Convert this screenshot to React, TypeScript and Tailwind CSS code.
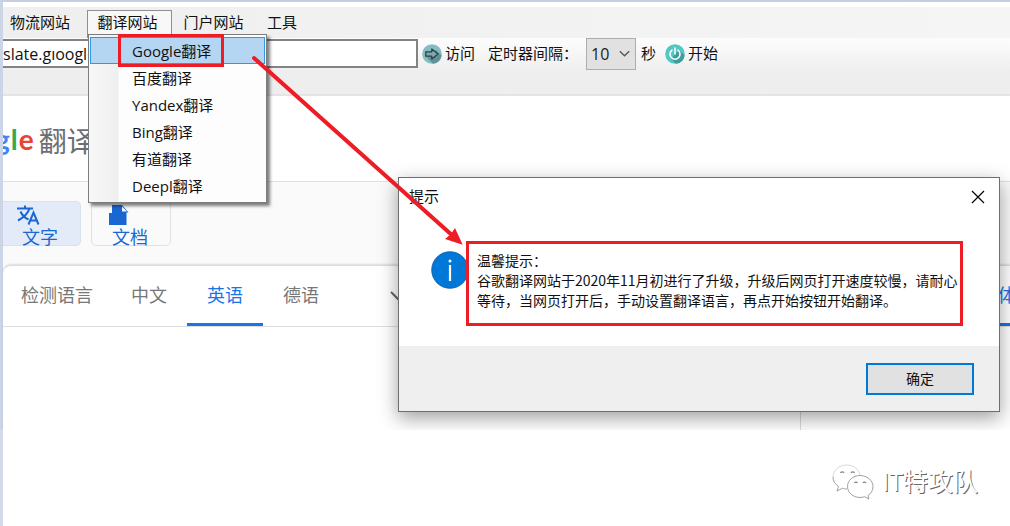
import { useState } from "react"

const topMenus = [
  { label: "物流网站", width: "w-[84px]" },
  { label: "翻译网站", width: "w-[85px]" },
  { label: "门户网站", width: "w-[84px]" },
  { label: "工具", width: "w-[53px]" },
]

const sites = ["Google翻译", "百度翻译", "Yandex翻译", "Bing翻译", "有道翻译", "Deepl翻译"]

const languages = [
  { label: "检测语言", width: "w-[108px]" },
  { label: "中文", width: "w-[76px]" },
  { label: "英语", width: "w-[76px]" },
  { label: "德语", width: "w-[76px]" },
]

function SiteMenu() {
  return (
    <ul className="absolute left-px top-[24px] z-20 w-[179px] border border-[#7d7d7d] bg-[linear-gradient(to_right,#f7f7f7_0,#efefef_29px,#fdfdfd_30px)] px-px pb-[3px] pt-[2px] shadow-[3px_3px_3px_rgba(0,0,0,0.5)]">
      {sites.map((site, i) => (
        <li key={site}>
          <button
            className={`block h-[27px] w-full whitespace-nowrap border pl-[41px] text-left text-[15px] leading-[26px] ${
              i === 0 ? "border-[#3398e2] bg-[#b4d6f2]" : "border-transparent"
            }`}
          >
            {site}
          </button>
        </li>
      ))}
    </ul>
  )
}

function MenuBar() {
  return (
    <nav className="flex h-[31px] bg-linear-to-r from-[#efefef] to-[#f5f5f5] pt-[3px]">
      {topMenus.map((menu) =>
        menu.label === "翻译网站" ? (
          <div key={menu.label} className={`relative ${menu.width}`}>
            <button className="flex h-7 w-full justify-center border border-b-0 border-[#8f8f8f] bg-[#f8f8f8] pr-1 text-[15px] leading-[22px]">
              {menu.label}
            </button>
            <SiteMenu />
          </div>
        ) : (
          <button key={menu.label} className={`h-6 shrink-0 pl-[7px] pr-2 text-center text-[15px] leading-6 first:text-left ${menu.width}`}>
            {menu.label}
          </button>
        )
      )}
    </nav>
  )
}

function Toolbar() {
  const [address, setAddress] = useState("slate.gıoogle")
  const [seconds, setSeconds] = useState("10")

  return (
    <div className="flex h-[58px] items-start border-b-2 border-[#e4e4e4] bg-linear-to-b from-[#fdfdfd] to-[#eeeeee] to-60% text-[15px]">
      <input
        aria-label="网址"
        value={address}
        onChange={(e) => setAddress(e.target.value)}
        className="mt-px h-[29px] w-[415px] border-2 border-l-0 border-[#838383] bg-white text-[16px] outline-none"
      />
      <button className="ml-1 flex h-8 items-center gap-[3px] leading-8">
        <svg width="20" height="20" viewBox="0 0 20 20">
          <circle cx="10" cy="10" r="9.8" fill="#86bcc3" />
          <path d="M14 6l5.6 5.5A10 10 0 0 1 11 19.8L4 12.5z" fill="#5f9299" />
          <path d="M3.8 7.8h6V5l6.2 5-6.2 5v-2.8h-6z" fill="#7fa9ae" stroke="#2e4144" strokeWidth="1.3" strokeLinejoin="round" />
        </svg>
        <span className="h-8 leading-[30px]">访问</span>
      </button>
      <label htmlFor="interval" className="ml-[13px] w-[98px] whitespace-nowrap leading-[30px]">
        定时器间隔：
      </label>
      <div className="relative h-8 w-[50px]">
        <select
          id="interval"
          value={seconds}
          onChange={(e) => setSeconds(e.target.value)}
          className="h-8 w-full appearance-none border border-[#adadad] bg-[#e1e1e1] pl-1 text-[16px] text-[#222]"
        >
          <option>10</option>
          <option>20</option>
          <option>30</option>
        </select>
        <svg className="pointer-events-none absolute right-[6px] top-3" width="11" height="8" viewBox="0 0 11 8">
          <path d="M.8 1.2l4.7 4.6 4.7-4.6" fill="none" stroke="#555" strokeWidth="1.3" />
        </svg>
      </div>
      <span className="ml-[5px] leading-[30px]">秒</span>
      <button className="ml-[9px] flex h-8 items-center gap-[3px]">
        <svg width="20" height="20" viewBox="0 0 20 20">
          <circle cx="10" cy="10" r="9.8" fill="#54c7c5" />
          <path d="M14 6l5.6 5.5A10 10 0 0 1 11 19.8l-5-5z" fill="#419a9c" />
          <path d="M7 6.2a5 5 0 1 0 6 0M10 4v6" fill="none" stroke="#f4ffff" strokeWidth="1.6" strokeLinecap="round" />
        </svg>
        <span className="h-8 leading-[30px]">开始</span>
      </button>
    </div>
  )
}

function TranslatePage() {
  return (
    <main>
      <header className="flex h-[86px] items-center overflow-hidden border-b border-[#e0e0e0] bg-white">
        <h1 className="-ml-[8px] flex items-center whitespace-nowrap">
          <span className="flex gap-px font-['Lato',sans-serif] text-[28px] font-bold leading-10">
            <span className="text-[#4285f4]">g</span>
            <span className="text-[#34a853]">l</span>
            <span className="text-[#ea4335]">e</span>
          </span>
          <span className="ml-[5px] pt-[5px] text-[28px] leading-10 text-[#6b6f73]">翻译</span>
        </h1>
      </header>

      <div className="bg-[#fafafa] pt-[19px]">
        <div className="flex gap-[10px] pb-[19px] text-[18px] text-[#1967d2]">
          <button className="h-[45px] w-[78px] rounded-r-[5px] border border-l-0 border-[#d9e0ee] bg-[#e4ebf8] pl-[13px] pt-[2px] text-left leading-[24px]">
            <svg width="24" height="20" viewBox="0 0 24 20" fill="none" stroke="#1967d2" strokeWidth="2">
              <path d="M1 3.5h16M9 .5v3M13.5 3.5C12 8.500 7.500 12.500 2 15.500M4.500 6.500c1.500 3.500 4.500 6.500 8 8" />
              <path d="M12.500 19.500L17.500 7.500l5 12M14.300 15.500h6.500" />
            </svg>
            <span className="ml-[6px] block h-5 leading-6">文字</span>
          </button>
          <button className="h-[45px] w-[80px] rounded-[5px] border border-[#dfe1e5] pl-[17px] pt-[2px] text-left leading-[24px]">
            <svg width="20" height="20" viewBox="0 0 20 20">
              <path d="M3 0h10l6.500 7.500H17.500V20H0V8h3z" fill="#1967d2" />
              <path d="M13 1.500V6.500h5z" fill="#fafafa" />
            </svg>
            <span className="ml-[3px] block h-5 leading-6">文档</span>
          </button>
        </div>

        <div className="flex h-[165px] overflow-hidden rounded-tl-lg border-t border-[#dcdcdc] bg-white text-[18px] text-[#777] shadow-[0_-1px_2px_rgba(0,0,0,0.12)]">
          <section className="w-[797px] shrink-0">
            <div className="flex h-[61px] items-center border-b border-[#dedede]">
              {languages.map((lang) => (
                <button
                  key={lang.label}
                  className={`h-[60px] border-b-[3px] pt-[2px] text-center ${lang.width} ${
                    lang.label === "英语" ? "border-[#1a73e8] text-[#1a73e8]" : "border-transparent"
                  }`}
                >
                  {lang.label}
                </button>
              ))}
              <button aria-label="更多语言" className="ml-[51px]">
                <svg width="16" height="10" viewBox="0 0 16 10" fill="none" stroke="#666" strokeWidth="2">
                  <path d="M1 1l7 7 7-7" />
                </svg>
              </button>
            </div>
          </section>
          <section className="min-w-0 flex-1 border-l border-[#dadada]">
            <div className="flex h-[61px] justify-end border-b border-[#dedede]">
              <button className="h-[60px] w-[34px] overflow-hidden whitespace-nowrap border-b-[3px] border-[#1a73e8] pl-1 pt-[2px] text-left text-[#1a73e8]">
                简体
              </button>
            </div>
          </section>
        </div>
      </div>
    </main>
  )
}

function MessageDialog() {
  return (
    <div
      role="dialog"
      aria-labelledby="dialog-title"
      className="absolute left-[398px] top-[177px] z-10 w-[602px] border border-[#6e6e6e] bg-white shadow-[0_6px_18px_rgba(0,0,0,0.38)]"
    >
      <div className="flex h-[38px] items-center justify-between pl-[10px] pr-[14px]">
        <h2 id="dialog-title" className="pb-[2px] text-[15px] leading-6">
          提示
        </h2>
        <button aria-label="关闭">
          <svg width="14" height="14" viewBox="0 0 14 14" stroke="#000" strokeWidth="1.2">
            <path d="M1 1l12 12M13 1L1 13" />
          </svg>
        </button>
      </div>
      <div className="flex h-[130px] items-start pl-8 pt-[34px]">
        <svg className="mt-px shrink-0" width="38" height="38" viewBox="0 0 38 38">
          <circle cx="19" cy="19" r="18.300" fill="#0078d7" stroke="#0a5ca8" strokeWidth="0.800" />
          <circle cx="19" cy="10" r="1.500" fill="#fff" />
          <path d="M19 14v16" stroke="#fff" strokeWidth="2.200" />
        </svg>
        <p className="ml-2 whitespace-nowrap font-['Noto_Sans_CJK_SC',sans-serif] text-[14px] leading-5 text-[#111]">
          温馨提示：
          <br />
          谷歌翻译网站于2020年11月初进行了升级，升级后网页打开速度较慢，请耐心
          <br />
          等待，当网页打开后，手动设置翻译语言，再点开始按钮开始翻译。
        </p>
      </div>
      <div className="flex h-[65px] items-center justify-end bg-[#efefef] pr-[25px]">
        <button className="h-8 w-[108px] border-2 border-[#0078d7] bg-[#e1e1e1] text-[14px]">确定</button>
      </div>
    </div>
  )
}

// red boxes and the arrow pointing from the menu item to the message
function Annotations() {
  return (
    <svg
      className="pointer-events-none absolute left-0 top-0 z-30"
      width="1010"
      height="430"
      viewBox="0 0 1010 430"
      fill="none"
      stroke="#ee1c25"
    >
      <rect x="119.500" y="35.500" width="103" height="30" strokeWidth="3" />
      <rect x="467.500" y="242.500" width="494" height="82" strokeWidth="3" />
      <path d="M254 58L453 236" strokeWidth="4" strokeLinecap="round" />
      <path d="M462.700 244.700L445 239l6-5 4-6z" fill="#ee1c25" stroke="none" />
    </svg>
  )
}

function Watermark() {
  return (
    <footer className="flex h-[96px] items-center justify-end gap-2 bg-white pr-8 pt-2">
      <svg width="42" height="36" viewBox="0 0 42 36" fill="none" stroke="#888" strokeWidth="0.800">
        <path d="M15 25c-2 0-3-.3-4.500-.8L5 27l1.500-4.500C3 20 1 17 1 13" />
        <path d="M1 13C1 6.500 7 1 14.500 1S27 5.500 28 11" stroke="#ccc" />
        <path d="M28 11.500c-7 0-12.500 5-12.500 11S21 33.500 28 33.500c1.500 0 3-.3 4.500-.8L37 35l-1-3.500c3-2 5-5 5-9 0-6-6-11-13-11z" />
        <path d="M8.500 9a2 2 0 0 1 3.500 0M19 9a2 2 0 0 1 3.500 0M22.500 19a1.700 1.700 0 0 1 3 0M31 19a1.700 1.700 0 0 1 3 0" strokeWidth="1.300" />
      </svg>
      <span className="pb-[2px] text-[25px] leading-9 text-white [text-shadow:1px_1px_0_#666]">IT特攻队</span>
    </footer>
  )
}

export default function App() {
  return (
    <div className="bg-white font-['Open_Sans','Noto_Sans_CJK_SC',sans-serif] text-[#111]">
      <div className="relative overflow-hidden">
        <div className="border-l-[3px] border-t-[2px] border-[#c6cfe2] border-l-[#ccd5e6] pt-[5px]">
          <MenuBar />
          <Toolbar />
          <TranslatePage />
        </div>
        <MessageDialog />
        <Annotations />
      </div>
      <div className="border-l-[3px] border-[#d3dbea]">
        <Watermark />
      </div>
    </div>
  )
}
